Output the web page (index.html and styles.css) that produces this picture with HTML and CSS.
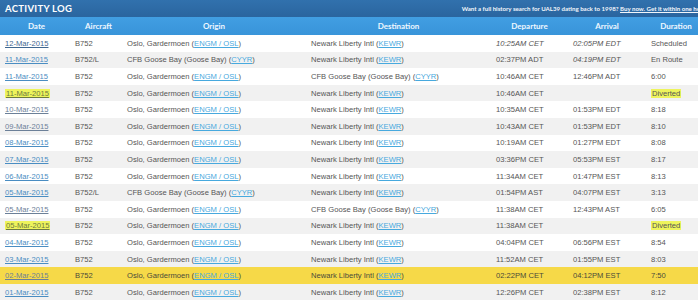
FILE: index.html
```html
<!DOCTYPE html>
<html>
<head>
<meta charset="utf-8">
<link rel="stylesheet" href="styles.css">
</head>
<body>
<div class="log">
  <div class="titlebar">
    <span class="title">ACTIVITY LOG</span>
    <span class="promo">Want a full history search for UAL39 dating back to 1998? <a class="promo-link">Buy now. Get it within one hour</a></span>
  </div>
  <div class="row head">
    <div>Date</div><div>Aircraft</div><div>Origin</div><div>Destination</div><div>Departure</div><div>Arrival</div><div>Duration</div>
  </div>
  <div class="row">
    <div><a class="date dark">12-Mar-2015</a></div><div>B752</div>
    <div>Oslo, Gardermoen (<a class="code">ENGM / OSL</a>)</div><div>Newark Liberty Intl (<a class="code">KEWR</a>)</div>
    <div class="it">10:25AM CET</div><div class="it">02:05PM EDT</div><div>Scheduled</div>
  </div>
  <div class="row alt">
    <div><a class="date">11-Mar-2015</a></div><div>B752/L</div>
    <div>CFB Goose Bay (Goose Bay) (<a class="code">CYYR</a>)</div><div>Newark Liberty Intl (<a class="code">KEWR</a>)</div>
    <div>02:37PM ADT</div><div class="it">04:19PM EDT</div><div>En Route</div>
  </div>
  <div class="row">
    <div><a class="date">11-Mar-2015</a></div><div>B752</div>
    <div>Oslo, Gardermoen (<a class="code">ENGM / OSL</a>)</div><div>CFB Goose Bay (Goose Bay) (<a class="code">CYYR</a>)</div>
    <div>10:46AM CET</div><div>12:46PM ADT</div><div>6:00</div>
  </div>
  <div class="row alt">
    <div><a class="date mark">11-Mar-2015</a></div><div>B752</div>
    <div>Oslo, Gardermoen (<a class="code">ENGM / OSL</a>)</div><div>Newark Liberty Intl (<a class="code">KEWR</a>)</div>
    <div>10:46AM CET</div><div></div><div><span class="mark">Diverted</span></div>
  </div>
  <div class="row">
    <div><a class="date grey">10-Mar-2015</a></div><div>B752</div>
    <div>Oslo, Gardermoen (<a class="code">ENGM / OSL</a>)</div><div>Newark Liberty Intl (<a class="code">KEWR</a>)</div>
    <div>10:35AM CET</div><div>01:53PM EDT</div><div>8:18</div>
  </div>
  <div class="row alt">
    <div><a class="date grey">09-Mar-2015</a></div><div>B752</div>
    <div>Oslo, Gardermoen (<a class="code">ENGM / OSL</a>)</div><div>Newark Liberty Intl (<a class="code">KEWR</a>)</div>
    <div>10:43AM CET</div><div>01:53PM EDT</div><div>8:10</div>
  </div>
  <div class="row">
    <div><a class="date">08-Mar-2015</a></div><div>B752</div>
    <div>Oslo, Gardermoen (<a class="code">ENGM / OSL</a>)</div><div>Newark Liberty Intl (<a class="code">KEWR</a>)</div>
    <div>10:19AM CET</div><div>01:27PM EDT</div><div>8:08</div>
  </div>
  <div class="row alt">
    <div><a class="date">07-Mar-2015</a></div><div>B752</div>
    <div>Oslo, Gardermoen (<a class="code">ENGM / OSL</a>)</div><div>Newark Liberty Intl (<a class="code">KEWR</a>)</div>
    <div>03:36PM CET</div><div>05:53PM EST</div><div>8:17</div>
  </div>
  <div class="row">
    <div><a class="date">06-Mar-2015</a></div><div>B752</div>
    <div>Oslo, Gardermoen (<a class="code">ENGM / OSL</a>)</div><div>Newark Liberty Intl (<a class="code">KEWR</a>)</div>
    <div>11:34AM CET</div><div>01:47PM EST</div><div>8:13</div>
  </div>
  <div class="row alt">
    <div><a class="date">05-Mar-2015</a></div><div>B752/L</div>
    <div>CFB Goose Bay (Goose Bay) (<a class="code">CYYR</a>)</div><div>Newark Liberty Intl (<a class="code">KEWR</a>)</div>
    <div>01:54PM AST</div><div>04:07PM EST</div><div>3:13</div>
  </div>
  <div class="row">
    <div><a class="date grey">05-Mar-2015</a></div><div>B752</div>
    <div>Oslo, Gardermoen (<a class="code">ENGM / OSL</a>)</div><div>CFB Goose Bay (Goose Bay) (<a class="code">CYYR</a>)</div>
    <div>11:38AM CET</div><div>12:43PM AST</div><div>6:05</div>
  </div>
  <div class="row alt">
    <div><a class="date mark">05-Mar-2015</a></div><div>B752</div>
    <div>Oslo, Gardermoen (<a class="code">ENGM / OSL</a>)</div><div>Newark Liberty Intl (<a class="code">KEWR</a>)</div>
    <div>11:38AM CET</div><div></div><div><span class="mark">Diverted</span></div>
  </div>
  <div class="row">
    <div><a class="date">04-Mar-2015</a></div><div>B752</div>
    <div>Oslo, Gardermoen (<a class="code">ENGM / OSL</a>)</div><div>Newark Liberty Intl (<a class="code">KEWR</a>)</div>
    <div>04:04PM CET</div><div>06:56PM EST</div><div>8:54</div>
  </div>
  <div class="row alt">
    <div><a class="date">03-Mar-2015</a></div><div>B752</div>
    <div>Oslo, Gardermoen (<a class="code">ENGM / OSL</a>)</div><div>Newark Liberty Intl (<a class="code">KEWR</a>)</div>
    <div>11:52AM CET</div><div>01:55PM EST</div><div>8:03</div>
  </div>
  <div class="row current">
    <div><a class="date grey">02-Mar-2015</a></div><div>B752</div>
    <div>Oslo, Gardermoen (<a class="code">ENGM / OSL</a>)</div><div>Newark Liberty Intl (<a class="code">KEWR</a>)</div>
    <div>02:22PM CET</div><div>04:12PM EST</div><div>7:50</div>
  </div>
  <div class="row alt">
    <div><a class="date">01-Mar-2015</a></div><div>B752</div>
    <div>Oslo, Gardermoen (<a class="code">ENGM / OSL</a>)</div><div>Newark Liberty Intl (<a class="code">KEWR</a>)</div>
    <div>12:26PM CET</div><div>02:38PM EST</div><div>8:12</div>
  </div>
</div>
</body>
</html>
```
FILE: styles.css
```css
html, body {
  margin: 0;
  padding: 0;
  background: #ffffff;
  overflow: hidden;
}
.log {
  width: 712px;
  font-family: "Liberation Sans", Arial, sans-serif;
  font-size: 7.6px;
  color: #555555;
}
.titlebar {
  height: 17px;
  background: linear-gradient(#3171ad, #2a659f);
  display: flex;
  align-items: center;
  padding: 0 6px 0 5px;
  color: #ffffff;
  font-family: Lato, "Open Sans", sans-serif;
}
.title {
  font-weight: 700;
  font-size: 9.5px;
  letter-spacing: 0.3px;
}
.promo {
  margin-left: auto;
  font-size: 6.1px;
  font-weight: 700;
  color: #f2f6fb;
}
.promo-link {
  text-decoration: underline;
}
.row {
  display: grid;
  grid-template-columns: 68px 54px 184px 185px 77px 78px 66px;
  height: 16.6px;
  align-items: center;
  background: #ffffff;
}
.row > div {
  padding-left: 5px;
  white-space: nowrap;
  overflow: hidden;
}
.row.alt {
  background: #f1f1f1;
}
.row.current {
  background: #f6d948;
  color: #4a4a3a;
}
.row.head {
  height: 18px;
  background: linear-gradient(#419ee2, #3894d9);
  color: #eef7ff;
  font-family: Lato, "Open Sans", sans-serif;
  font-weight: 700;
  font-size: 8px;
}
.row.head > div {
  padding-left: 0;
  text-align: center;
}
.row.head > div:last-child {
  padding-right: 6px;
}
.it {
  font-style: italic;
}
.date {
  color: #4a8dc2;
  text-decoration: underline;
}
.date.dark {
  color: #3f6790;
}
.date.grey {
  color: #6c8098;
}
.code {
  color: #47a9de;
  text-decoration: underline;
}
.mark {
  background: #eef45c;
  padding: 1px 1px;
}
.date.mark {
  color: #6c7a40;
}
.row > div:first-child {
  padding-left: 5px;
}
.row > div:nth-child(2) {
  padding-left: 7px;
}
```
